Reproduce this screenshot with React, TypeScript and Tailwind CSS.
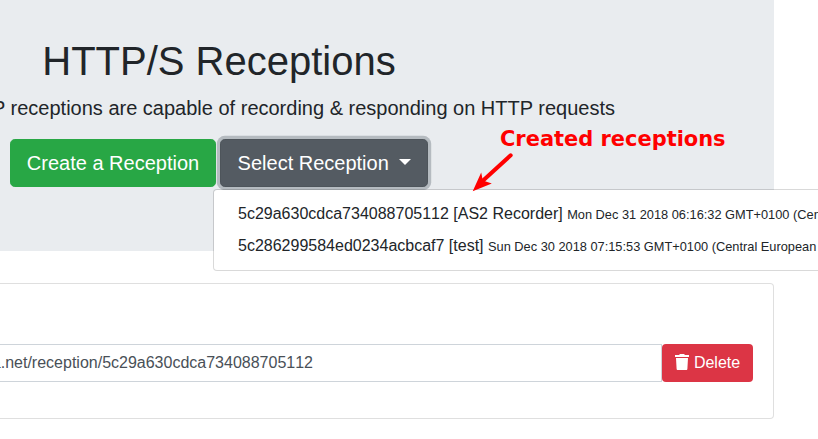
import React from "react";

const receptions = [
  {
    id: "5c29a630cdca734088705112",
    name: "AS2 Recorder",
    date: "Mon Dec 31 2018 06:16:32 GMT+0100 (Central European Standard Time)",
  },
  {
    id: "5c286299584ed0234acbcaf7",
    name: "test",
    date: "Sun Dec 30 2018 07:15:53 GMT+0100 (Central European Standard Time)",
  },
];

function TrashIcon() {
  return (
    <svg className="block" width="14" height="16" viewBox="0 0 14 16" fill="currentColor" aria-hidden="true">
      <path d="M0 1h4.500V0h5v1H14v2H0z" />
      <path d="M1 4h12l-.6 10.800c0 .8-.5 1.200-1.200 1.200H2.800c-.7 0-1.200-.4-1.200-1.200z" />
    </svg>
  );
}

function ReceptionMenu() {
  return (
    <div className="absolute left-[213px] top-[189px] w-[760px] rounded border border-black/15 bg-white bg-clip-padding py-2">
      {receptions.map((r) => (
        <div key={r.id} className="h-8 whitespace-nowrap px-6 py-1 text-base leading-6 [font-kerning:none]">
          {r.id} [{r.name}] <small className="text-[12.8px]">{r.date}</small>
        </div>
      ))}
    </div>
  );
}

function Annotation() {
  return (
    <>
      <div className="absolute left-[500px] top-[125px] whitespace-nowrap font-['DejaVu_Sans',sans-serif] text-[20.95px] font-bold leading-7 text-[#ff0000]">
        Created receptions
      </div>
      <svg className="absolute left-[465px] top-[145px]" width="60" height="50" viewBox="0 0 60 50">
        <path d="M45.700 10.300 17 36.500" stroke="#f00" strokeWidth="4" strokeLinecap="round" />
        <path d="M7.700 46.300 16.200 27.500 17.800 35.400 26.800 38.500z" fill="#f00" />
      </svg>
    </>
  );
}

export default function App() {
  return (
    <div className="relative h-[439px] w-[818px] overflow-hidden bg-white font-['Liberation_Sans',Arial,sans-serif] text-base text-[#212529]">
      <header className="h-[251px] w-[774px] bg-[#e9ecef] pt-[37px]">
        <h1 className="w-[438px] text-center text-[40px] leading-[48px]">HTTP/S Receptions</h1>
        <div className="mt-2 flex w-[615px] justify-end">
          <p className="shrink-0 whitespace-nowrap text-xl leading-[30px]">
            HTTP receptions are capable of recording &amp; responding on HTTP requests
          </p>
        </div>
        <div className="mt-4 flex gap-1 pl-[10px]">
          <button className="h-12 w-[206px] whitespace-nowrap rounded-[4.8px] border border-[#28a745] bg-[#28a745] text-xl leading-[30px] text-white">
            Create a Reception
          </button>
          <button className="h-12 w-[208px] whitespace-nowrap rounded-[4.8px] border border-[#4e555b] bg-[#545b62] pl-[1px] text-xl leading-[30px] text-white shadow-[0_0_0_3.2px_rgba(130,138,145,0.5)]">
            Select Reception{" "}
            <span className="ml-[5px] inline-block border-x-[6px] border-b-0 border-t-[6px] border-x-transparent border-t-white align-[5.1px]" />
          </button>
        </div>
      </header>

      <section className="mt-8 h-[136px] w-[774px] rounded-r border border-l-0 border-black/[0.125] pr-5 pt-[60px]">
        <div className="flex">
          <div className="h-[38px] w-[662px] border-y border-r border-[#ced4da] pt-[6px] text-[#495057]">
            <div className="flex w-[313px] justify-end">
              <span className="shrink-0 whitespace-nowrap leading-6 [font-kerning:none]">
                a.net/reception/5c29a630cdca734088705112
              </span>
            </div>
          </div>
          <button className="flex h-[38px] w-[91px] items-center justify-center gap-[5px] rounded bg-[#dc3545] text-white">
            <span className="-mt-[2px]">
              <TrashIcon />
            </span>
            <span className="leading-6">Delete</span>
          </button>
        </div>
      </section>

      <ReceptionMenu />
      <Annotation />
    </div>
  );
}
